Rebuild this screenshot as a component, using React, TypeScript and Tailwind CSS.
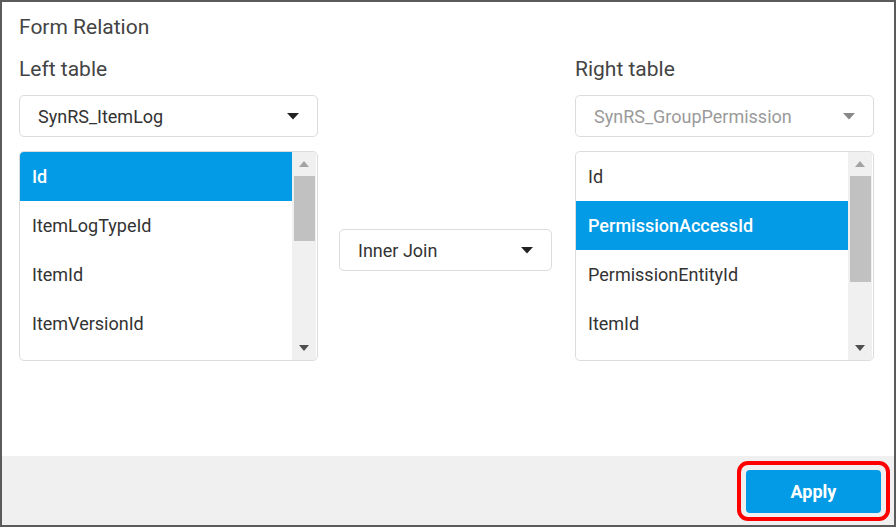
import React from "react";

function Caret({ color = "#333" }: { color?: string }) {
  return (
    <svg width="12" height="7" viewBox="0 0 12 7">
      <path d="M0 0 L12 0 L6 6.5 Z" fill={color} />
    </svg>
  );
}

function Select({ value, disabled, className }: { value: string; disabled?: boolean; className?: string }) {
  return (
    <div
      className={
        "flex items-center justify-between rounded-[5px] border border-[#dcdcdc] bg-white pl-[18px] pr-[18px] " +
        (className || "")
      }
    >
      <span className={"text-[18px] " + (disabled ? "text-[#9a9a9a]" : "text-[#333]")}>{value}</span>
      <Caret color={disabled ? "#888" : "#222"} />
    </div>
  );
}

function ListBox({ items, selected, thumbTop, thumbH }: { items: string[]; selected: number; thumbTop: number; thumbH: number }) {
  return (
    <div className="flex h-[210px] overflow-hidden rounded-[5px] border border-[#dcdcdc] bg-white">
      <div className="flex-1">
        {items.map((it, i) => (
          <div
            key={it}
            className={
              "flex h-[49px] items-center pb-[1px] pl-[12px] text-[18px] " +
              (i === selected ? "bg-[#039be5] text-white font-medium" : "text-[#333]")
            }
          >
            {it}
          </div>
        ))}
      </div>
      <div className="relative mr-[1px] w-[24px] bg-[#f0f0f0]">
        <svg className="absolute left-[7px] top-[9px]" width="10" height="6" viewBox="0 0 10 6">
          <path d="M0 6 L10 6 L5 0 Z" fill="#a3a3a3" />
        </svg>
        <div className="absolute left-[2px] right-[1px] bg-[#c1c1c1]" style={{ top: thumbTop, height: thumbH }} />
        <svg className="absolute bottom-[9px] left-[7px]" width="10" height="6" viewBox="0 0 10 6">
          <path d="M0 0 L10 0 L5 6 Z" fill="#505050" />
        </svg>
      </div>
    </div>
  );
}

export default function App() {
  return (
    <div
      className="flex h-[527px] w-[896px] flex-col border-2 border-[#5b5b5b] bg-white text-[#333]"
      style={{ fontFamily: "Roboto, 'Noto Sans', sans-serif" }}
    >
      <div className="flex-1 pl-[17px] pr-[19px]">
        <div className="pt-[13px] text-[21px] leading-[24px] text-[#444]">Form Relation</div>
        <div className="mt-[18px] flex">
          <div className="flex w-[299px] flex-col">
            <div className="text-[21px] leading-[24px] text-[#444]">Left table</div>
            <Select value="SynRS_ItemLog" className="mt-[14px] h-[42px]" />
            <div className="mt-[14px]">
              <ListBox items={["Id", "ItemLogTypeId", "ItemId", "ItemVersionId"]} selected={0} thumbTop={24} thumbH={65} />
            </div>
          </div>
          <div className="ml-[21px] mt-[172px] w-[213px]">
            <Select value="Inner Join" className="h-[42px]" />
          </div>
          <div className="ml-[23px] flex w-[299px] flex-col">
            <div className="text-[21px] leading-[24px] text-[#444]">Right table</div>
            <Select value="SynRS_GroupPermission" disabled className="mt-[14px] h-[42px]" />
            <div className="mt-[14px]">
              <ListBox items={["Id", "PermissionAccessId", "PermissionEntityId", "ItemId"]} selected={1} thumbTop={24} thumbH={106} />
            </div>
          </div>
        </div>
      </div>
      <div className="flex h-[69px] items-center justify-end bg-[#f0f0f0] pr-[4px]">
        <div className="rounded-[11px] border-[4px] border-[#ff0000] px-[5px] pb-[4px] pt-[5px]">
          <button className="h-[43px] w-[135px] rounded-[4px] bg-[#039be5] text-[18px] font-bold text-white">
            Apply
          </button>
        </div>
      </div>
    </div>
  );
}
